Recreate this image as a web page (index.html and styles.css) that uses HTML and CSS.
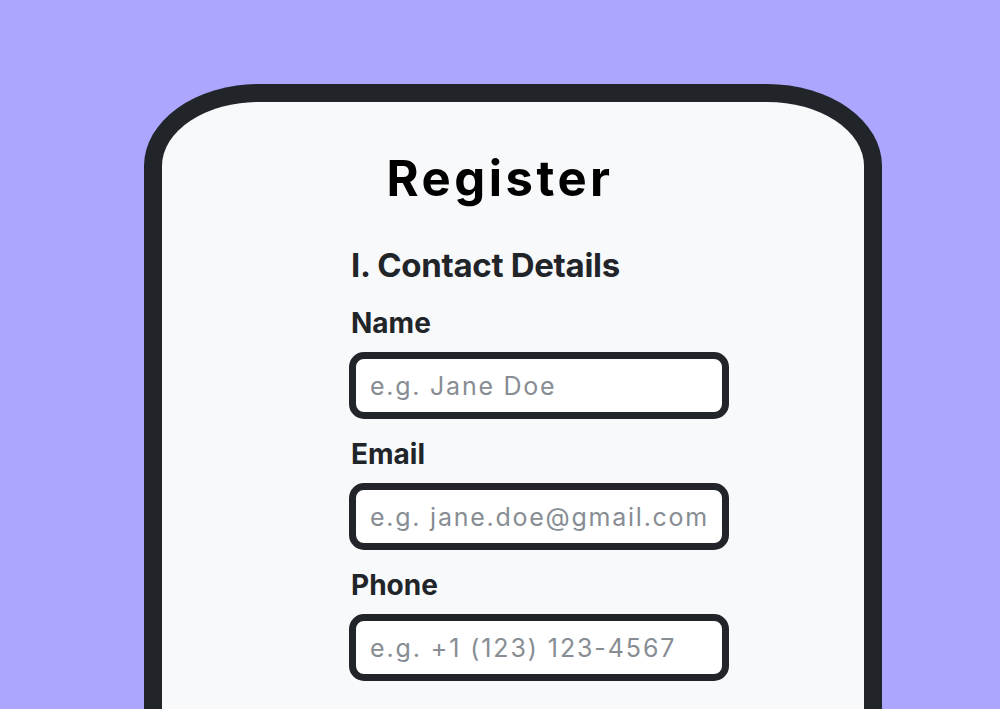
FILE: index.html
```html
<!DOCTYPE html>
<html lang="en">
<head>
<meta charset="utf-8">
<title>Register</title>
<link rel="stylesheet" href="styles.css">
</head>
<body>
<main class="page">
  <section class="card">
    <h1 class="title">Register</h1>
    <form class="form">
      <h2 class="section-title">I. Contact Details</h2>
      <div class="field">
        <label class="label" for="name">Name</label>
        <input class="input" id="name" type="text" placeholder="e.g. Jane Doe">
      </div>
      <div class="field">
        <label class="label" for="email">Email</label>
        <input class="input" id="email" type="email" placeholder="e.g. jane.doe@gmail.com">
      </div>
      <div class="field">
        <label class="label" for="phone">Phone</label>
        <input class="input input-phone" id="phone" type="tel" placeholder="e.g. +1 (123) 123-4567">
      </div>
    </form>
  </section>
</main>
</body>
</html>
```

FILE: styles.css
```css
* { box-sizing: border-box; }
html, body {
  margin: 0;
  height: 100%;
  overflow: hidden;
}
body {
  background: #aca6fe;
  font-family: Inter, "Noto Sans", sans-serif;
}
.page {
  padding: 84px 0 0 144px;
}
.card {
  width: 738px;
  height: 625px;
  background: #f8f9fa;
  border: 18px solid #212529;
  border-bottom: none;
  border-radius: 115px 115px 0 0 / 82px 82px 0 0;
  padding: 53px 26px 0 0;
}
.title {
  margin: 0;
  font-size: 49px;
  line-height: 48px;
  font-weight: 700;
  letter-spacing: 3.5px;
  color: #000;
  text-align: center;
}
.form {
  margin: 42px 0 0 187px;
  width: 380px;
  display: flex;
  flex-direction: column;
  gap: 15px;
}
.section-title {
  margin: 0 0 3px;
  padding-left: 2px;
  font-size: 33px;
  line-height: 40px;
  font-weight: 700;
  letter-spacing: -0.3px;
  color: #212529;
}
.field {
  display: flex;
  flex-direction: column;
}
.label {
  padding-left: 2px;
  font-size: 28px;
  line-height: 40px;
  font-weight: 700;
  color: #212529;
}
.input {
  margin-top: 9px;
  width: 380px;
  height: 67px;
  border: 7px solid #212529;
  border-radius: 15px;
  background: #fff;
  padding: 0 0 0 14px;
  font-family: Inter, "Noto Sans", sans-serif;
  font-size: 25px;
  letter-spacing: 1.75px;
  color: #212529;
  outline: none;
}
.input-phone {
  letter-spacing: 1.9px;
}
.input::placeholder {
  color: #878d93;
}
```
